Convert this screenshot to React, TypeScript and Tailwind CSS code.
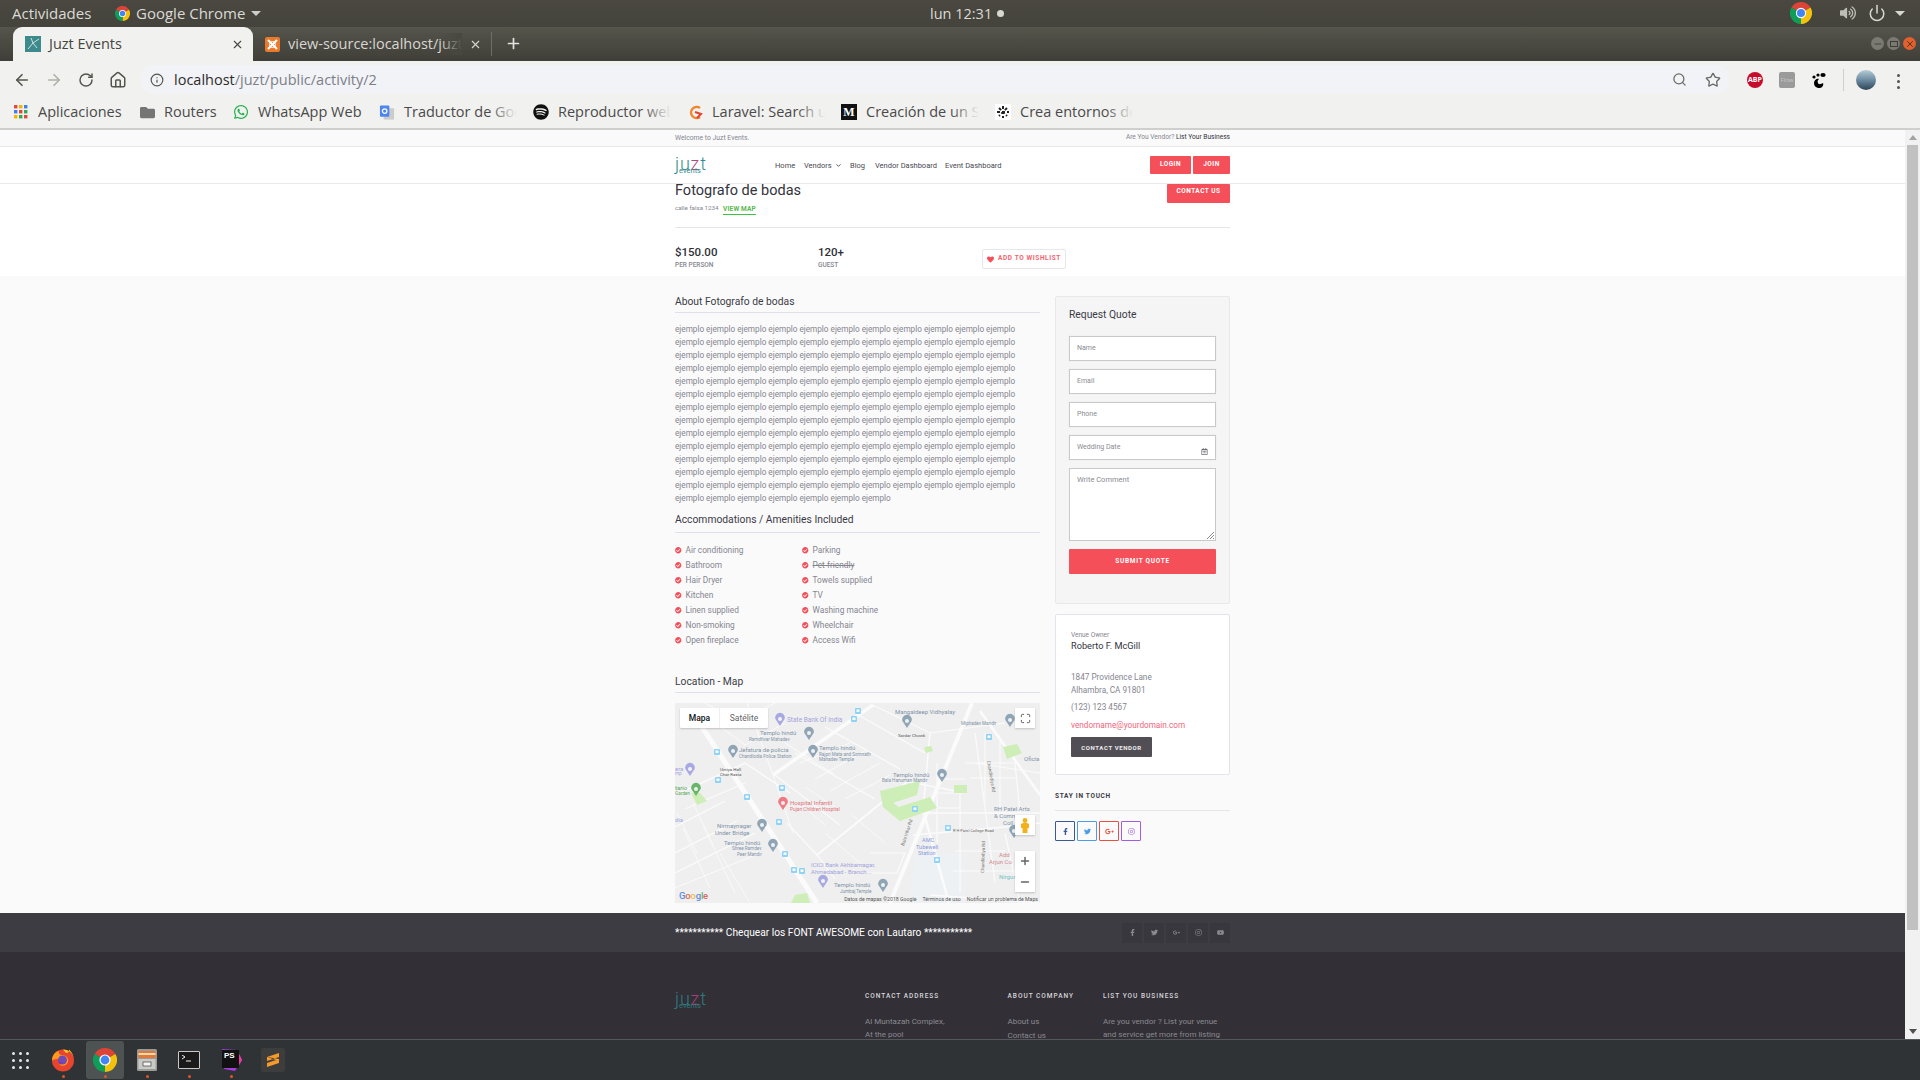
import React from "react";
import { FaFacebookF, FaTwitter, FaGooglePlusG, FaInstagram, FaYoutube, FaHeart, FaCheckCircle, FaWhatsapp, FaSpotify, FaFolder, FaRegCalendarAlt, FaVolumeUp } from "react-icons/fa";
import { ArrowLeft, ArrowRight, RotateCw, Home, Info, Search, Star, Power, X, Plus, Minus, Maximize, ChevronDown } from "lucide-react";

function ChromeLogo({ size }: { size: number }) {
  return (
    <svg width={size} height={size} viewBox="0 0 24 24">
      <path d="M12 12L1.6 6A12 12 0 0 1 22.4 6Z" fill="#db4437" />
      <path d="M12 12L22.4 6A12 12 0 0 1 12 24Z" fill="#f4c20d" />
      <path d="M12 12L12 24A12 12 0 0 1 1.6 6Z" fill="#0f9d58" />
      <circle cx="12" cy="12" r="5.6" fill="#fff" />
      <circle cx="12" cy="12" r="4.4" fill="#4285f4" />
    </svg>
  );
}

function Logo({ dim }: { dim?: boolean }) {
  return (
    <div className={`relative w-[30px] h-[17px] font-['Roboto',sans-serif] ${dim ? "opacity-85" : ""}`}>
      <div className="text-[18px] leading-[13px] font-light tracking-[0.8px] text-[#2f8a8c] whitespace-nowrap">
        ju<span className="text-[#b0487f]">z</span>t
      </div>
      <div className="absolute left-[4px] top-[10px] text-[7.5px] leading-[8px] text-[#2f8a8c]">events</div>
    </div>
  );
}

function Bookmark({ icon, label, w, fade, gap }: { icon: React.ReactNode; label: string; w: number; fade?: boolean; gap: number }) {
  return (
    <div className="flex items-center gap-[9px] h-full" style={{ marginRight: gap }}>
      <div className="w-[16px] flex justify-center items-center shrink-0">{icon}</div>
      <div className="relative overflow-hidden whitespace-nowrap text-[14.5px] text-[#4a4a4a]" style={{ width: w }}>
        {label}
        {fade && <div className="absolute right-0 top-0 bottom-0 w-[28px] bg-gradient-to-r from-transparent to-[#f1f1ef]" />}
      </div>
    </div>
  );
}

function TopSystemBar() {
  return (
    <div className="h-[27px] bg-gradient-to-b from-[#4a4840] to-[#44433c] flex items-center text-[#dbdad5] text-[15px] font-medium font-['Open_Sans',sans-serif] relative shrink-0">
      <span className="ml-[12px] w-[103px]">Actividades</span>
      <ChromeLogo size={15} />
      <span className="ml-[6px]">Google Chrome</span>
      <span className="ml-[6px] w-0 h-0 border-l-[5px] border-r-[5px] border-t-[5px] border-l-transparent border-r-transparent border-t-[#cfcdc8]" />
      <div className="absolute left-[930px] top-0 h-full flex items-center gap-[5px] text-[14.5px]">
        <span>lun 12:31</span>
        <span className="w-[7px] h-[7px] rounded-full bg-[#d8d7d2]" />
      </div>
      <div className="absolute left-[1790px] top-[2px]"><ChromeLogo size={22} /></div>
      <div className="absolute left-[1840px] top-[5px] text-[#bdbcb6]"><FaVolumeUp size={16} /></div>
      <div className="absolute left-[1868px] top-[4px] text-[#d8d7d2]"><Power size={18} strokeWidth={2} /></div>
      <span className="absolute left-[1895px] top-[11px] w-0 h-0 border-l-[5px] border-r-[5px] border-t-[5px] border-l-transparent border-r-transparent border-t-[#d8d7d2]" />
    </div>
  );
}

function TabBar() {
  return (
    <div className="h-[34px] bg-gradient-to-b from-[#56554c] to-[#3f3e38] flex items-end pl-[13px] relative shrink-0 font-['Open_Sans',sans-serif]">
      <div className="w-[240px] h-[34px] bg-[#f1f1ef] rounded-t-[9px] flex items-center pl-[12px] text-[14.5px] text-[#45453f] relative">
        <svg width="16" height="16" viewBox="0 0 16 16">
          <rect width="16" height="16" fill="#3c8a8c" />
          <path d="M3 13L8 7L14 3M8 7L6 2M8 7L12 12" stroke="#cfe3e2" strokeWidth="1" fill="none" />
        </svg>
        <span className="ml-[8px]">Juzt Events</span>
        <X size={13} className="absolute left-[218px] top-[11px] text-[#45453f]" />
      </div>
      <div className="w-[238px] h-[34px] flex items-center pl-[12px] text-[14.5px] text-[#d8d7d2] relative">
        <div className="w-[15px] h-[15px] rounded-[2px] bg-[#ea7a2b] flex items-center justify-center">
          <svg width="11" height="11" viewBox="0 0 11 11"><path d="M1 1L10 10M10 1L1 10" stroke="#fff" strokeWidth="2" /><circle cx="5.5" cy="5.5" r="3" fill="none" stroke="#fff" /></svg>
        </div>
        <span className="ml-[8px] w-[174px] overflow-hidden whitespace-nowrap relative">
          view-source:localhost/juzt/public
          <span className="absolute right-0 top-0 bottom-0 w-[22px] bg-gradient-to-r from-transparent to-[#494840]" />
        </span>
        <X size={13} className="absolute left-[216px] top-[11px] text-[#d8d7d2]" />
      </div>
      <div className="h-[24px] w-px bg-[#6f6e66] mb-[5px]" />
      <Plus size={17} strokeWidth={2.4} className="ml-[13px] mb-[9px] text-[#e4e3df]" />
      <div className="absolute left-[1871px] top-[10px] w-[13px] h-[13px] rounded-full bg-[#7a7972] flex items-center justify-center"><Minus size={10} className="text-[#3c3b36]" /></div>
      <div className="absolute left-[1887px] top-[10px] w-[13px] h-[13px] rounded-full bg-[#7a7972] flex items-center justify-center"><span className="w-[8px] h-[6px] border border-[#3c3b36]" /></div>
      <div className="absolute left-[1903px] top-[10px] w-[13px] h-[13px] rounded-full bg-[#e0602e] flex items-center justify-center"><X size={10} className="text-[#4a2a18]" /></div>
    </div>
  );
}

function ToolBar() {
  return (
    <div className="h-[35px] bg-[#f1f1ef] flex items-center relative shrink-0 font-['Open_Sans',sans-serif]">
      <ArrowLeft size={18} strokeWidth={2.2} className="absolute left-[13px] top-[10px] text-[#55554f]" />
      <ArrowRight size={18} strokeWidth={2.2} className="absolute left-[45px] top-[10px] text-[#b0b0ab]" />
      <RotateCw size={16} strokeWidth={2.2} className="absolute left-[78px] top-[11px] text-[#55554f]" />
      <Home size={18} strokeWidth={2} className="absolute left-[109px] top-[10px] text-[#55554f]" />
      <div className="ml-[140px] mt-[2px] w-[1590px] h-[29px] rounded-full bg-[#f2f3f6] flex items-center pl-[10px]">
        <Info size={14} className="text-[#55554f]" />
        <span className="ml-[10px] text-[14.5px] text-[#2c2c2c]">localhost<span className="text-[#7c7f88]">/juzt/public/activity/2</span></span>
      </div>
      <Search size={15} className="absolute left-[1672px] top-[11px] text-[#6a6a66]" />
      <Star size={16} strokeWidth={2} className="absolute left-[1705px] top-[11px] text-[#6a6a66]" />
      <div className="absolute left-[1747px] top-[11px] w-[16px] h-[16px] rounded-full bg-[#c70d2c] text-white text-[7px] font-bold flex items-center justify-center">ABP</div>
      <div className="absolute left-[1779px] top-[11px] w-[16px] h-[16px] rounded-[2px] bg-[#9a9a9a] text-[#c8c8c8] text-[6px] flex items-center justify-center overflow-hidden">Flow</div>
      <svg className="absolute left-[1812px] top-[11px]" width="14" height="16" viewBox="0 0 14 16">
        <path d="M8 16c-4 0-6-2-6-5s3-5 5-4c-1 1-2 2-1 4s3 1 5 0c1 2-1 5-3 5z" fill="#000" />
        <circle cx="2" cy="5" r="1.6" fill="#000" /><circle cx="6" cy="3" r="1.6" fill="#000" /><ellipse cx="11" cy="3" rx="2.6" ry="2" fill="#000" />
      </svg>
      <div className="absolute left-[1843px] top-[8px] w-px h-[22px] bg-[#cfcfcc]" />
      <div className="absolute left-[1856px] top-[9px] w-[20px] h-[20px] rounded-full bg-gradient-to-b from-[#b7cdd8] via-[#6d8ba0] to-[#2d4558]" />
      <div className="absolute left-[1897px] top-[13px] flex flex-col gap-[3px]">
        <span className="w-[3px] h-[3px] rounded-full bg-[#55554f]" /><span className="w-[3px] h-[3px] rounded-full bg-[#55554f]" /><span className="w-[3px] h-[3px] rounded-full bg-[#55554f]" />
      </div>
    </div>
  );
}

function BookmarksBar() {
  return (
    <div className="h-[34px] bg-[#f1f1ef] border-b-2 border-[#cfcfcd] flex items-center pl-[13px] shrink-0 font-['Open_Sans',sans-serif]">
      <Bookmark
        w={88}
        gap={13}
        icon={
          <svg width="14" height="14" viewBox="0 0 14 14">
            {[0, 5, 10].map((y, r) => [0, 5, 10].map((x, c) => (
              <rect key={`${r}${c}`} x={x} y={y} width="3.4" height="3.4" fill={["#e0483d", "#f4b400", "#3f7fe8", "#3f7fe8", "#e0483d", "#34a853", "#f4b400", "#34a853", "#e0483d"][r * 3 + c]} />
            )))}
          </svg>
        }
        label="Aplicaciones"
      />
      <Bookmark w={56} gap={13} icon={<FaFolder size={15} className="text-[#757575]" />} label="Routers" />
      <Bookmark w={108} gap={13} icon={<FaWhatsapp size={16} className="text-[#25b04e]" />} label="WhatsApp Web" />
      <Bookmark
        w={113}
        gap={16}
        fade
        icon={
          <svg width="17" height="17" viewBox="0 0 17 17"><rect x="5" y="4" width="11" height="12" fill="#ccc" /><rect x="1" y="1" width="10" height="12" rx="1" fill="#4d86ee" /><circle cx="6" cy="7" r="2.4" fill="none" stroke="#fff" strokeWidth="1.3" /></svg>
        }
        label="Traductor de Google"
      />
      <Bookmark w={113} gap={16} fade icon={<FaSpotify size={16} className="text-[#111]" />} label="Reproductor web" />
      <Bookmark
        w={113}
        gap={16}
        fade
        icon={<svg width="15" height="15" viewBox="0 0 15 15"><path d="M12 3A5.6 5.6 0 1 0 12 12" fill="none" stroke="#f4842c" strokeWidth="2.4" /><path d="M7 7L13 9L9 13" fill="none" stroke="#e2452f" strokeWidth="2" /></svg>}
        label="Laravel: Search u"
      />
      <Bookmark
        w={113}
        gap={16}
        fade
        icon={<div className="w-[16px] h-[16px] bg-[#111] text-white text-[12px] font-bold flex items-center justify-center font-['Liberation_Serif',serif]">M</div>}
        label="Creación de un Sitio"
      />
      <Bookmark
        w={113}
        gap={16}
        fade
        icon={<svg width="16" height="16" viewBox="0 0 16 16"><rect width="16" height="16" fill="#fff" /><path d="M8 2V14M2 8H14M4 4L12 12M12 4L4 12" stroke="#222" strokeWidth="2" strokeDasharray="3 2" /></svg>}
        label="Crea entornos de"
      />
    </div>
  );
}

const RED = "bg-[#f54f5a]";

function TopStrip() {
  return (
    <div className="h-[17px] bg-[#fafafa] border-b border-[#e9e9ec] shrink-0">
      <div className="w-[555px] mx-auto h-full flex items-center justify-between text-[6.8px] text-[#858590]">
        <span>Welcome to Juzt Events.</span>
        <span className="text-[6.6px]">Are You Vendor? <span className="text-[#33333c]">List Your Business</span></span>
      </div>
    </div>
  );
}

function NavBar() {
  return (
    <div className="h-[37px] bg-white border-b border-[#e9e9ec] shrink-0">
      <div className="w-[555px] mx-auto h-full flex items-center relative">
        <div className="w-[100px]"><Logo /></div>
        <nav className="flex items-center text-[7.5px] text-[#484852] font-normal mt-[1px]">
          <span className="w-[29px]">Home</span>
          <span className="w-[46px] flex items-center">Vendors <ChevronDown size={7} strokeWidth={3} className="ml-[3px]" /></span>
          <span className="w-[25px]">Blog</span>
          <span className="w-[70px]">Vendor Dashboard</span>
          <span>Event Dashboard</span>
        </nav>
        <div className="ml-auto flex gap-[2px] -mt-[1px]">
          <button className={`block w-[41px] h-[18px] ${RED} rounded-[1px] text-white text-[6.5px] font-bold tracking-[0.5px]`}>LOGIN</button>
          <button className={`block w-[37px] h-[18px] ${RED} rounded-[1px] text-white text-[6.5px] font-bold tracking-[0.5px]`}>JOIN</button>
        </div>
      </div>
    </div>
  );
}

function Hero() {
  return (
    <div className="bg-white shrink-0">
      <div className="w-[555px] mx-auto">
        <div className="h-[44px] border-b border-[#e6e6ea] flex justify-between items-start">
          <div>
            <div className="text-[14.5px] leading-[13px] text-[#33333c]">Fotografo de bodas</div>
            <div className="flex items-center mt-[5px] h-[14px] text-[6.5px] text-[#85858f]">
              <span className="w-[48px] text-[6.2px]">calle falsa 1234</span>
              <span className="font-bold text-[#57b94a] border-b border-[#3fc33f] tracking-[0.2px] leading-[9px] mt-[2px]">VIEW MAP</span>
            </div>
          </div>
          <button className={`block w-[63px] h-[19px] ${RED} rounded-[1px] text-white text-[6.5px] font-bold tracking-[0.5px] pb-[3px]`}>CONTACT US</button>
        </div>
        <div className="h-[48px] flex">
          <div className="w-[143px] pt-[17px]">
            <div className="text-[11.5px] leading-[14px] font-medium text-[#2f2f38]">$150.00</div>
            <div className="text-[6.5px] leading-[8px] mt-[2px] font-medium text-[#85858f]">PER PERSON</div>
          </div>
          <div className="w-[164px] pt-[17px]">
            <div className="text-[11.5px] leading-[14px] font-medium text-[#2f2f38]">120+</div>
            <div className="text-[6.5px] leading-[8px] mt-[2px] font-medium text-[#85858f]">GUEST</div>
          </div>
          <button className="w-[84px] h-[20px] mt-[21px] bg-white border border-[#e7e7ea] rounded-[2px] flex items-center justify-center gap-[4px] text-[6.5px] font-bold tracking-[0.6px] text-[#f6616c]">
            <FaHeart size={7} className="text-[#f54f5a]" />ADD TO WISHLIST
          </button>
        </div>
      </div>
    </div>
  );
}

const amenities: [string, string][] = [
  ["Air conditioning", "Parking"],
  ["Bathroom", "Pet-friendly"],
  ["Hair Dryer", "Towels supplied"],
  ["Kitchen", "TV"],
  ["Linen supplied", "Washing machine"],
  ["Non-smoking", "Wheelchair"],
  ["Open fireplace", "Access Wifi"],
];

function Amenity({ label }: { label: string }) {
  return (
    <div className="flex items-center gap-[4px] h-[15px] text-[8.3px] text-[#858590]">
      <FaCheckCircle size={6.5} className="text-[#f54f5a] shrink-0" />
      <span className={label === "Pet-friendly" ? "line-through" : ""}>{label}</span>
    </div>
  );
}

const roads: [string, number][] = [
  ["M27 24L142 200", 5],
  ["M98 72L198 2", 3.5],
  ["M142 152L232 79", 2],
  ["M297 0L215 200", 4],
  ["M248 107L274 200", 2.5],
  ["M305 8L365 92", 2.5],
  ["M0 92L70 60L115 90", 1.5],
  ["M72 0L98 72L118 130", 1],
  ["M112 120L142 152L160 176", 1.2],
  ["M240 110L365 110", 1.5],
  ["M238 132L330 124L365 120", 1.5],
  ["M230 78L290 90", 1.5],
  ["M198 2L255 30L330 20", 1.2],
  ["M120 50L200 96", 1.2],
  ["M150 24L225 66", 1.2],
  ["M180 10L250 50", 1.2],
  ["M100 72L165 122", 1.2],
  ["M255 30L248 107", 1.5],
  ["M290 60L340 60L345 110", 1.2],
  ["M300 30L320 180", 1.2],
  ["M285 90L285 190", 1.2],
  ["M262 60V140", 1.2],
  ["M330 130L345 200", 1.2],
  ["M10 106L70 80", 1.2],
  ["M0 124L50 98", 1.2],
  ["M0 150L62 118", 1.2],
  ["M0 170L80 130", 1.2],
  ["M2 110L22 150", 0.8],
  ["M18 100L38 142", 0.8],
  ["M195 150H230L222 170H190", 1.2],
  ["M130 84L160 104", 0.8],
  ["M125 100L150 122", 0.8],
  ["M280 148H330", 1.2],
  ["M278 168H340", 1.2],
  ["M255 192L365 200", 1.5],
  ["M110 40L160 72", 1],
  ["M125 60L175 40", 1],
  ["M140 76L190 48", 1],
  ["M155 88L205 60", 1],
  ["M170 96L215 72", 1],
  ["M30 0L62 18L100 0", 1],
  ["M40 20L70 42L110 20", 1],
  ["M300 60L365 70", 1],
  ["M295 75H340", 1],
  ["M310 30V100", 1],
  ["M325 35V105", 1],
  ["M262 90H285", 1],
  ["M262 76H290", 1],
  ["M262 105H285", 1],
  ["M8 125L35 185", 0.8],
  ["M28 122L60 190", 0.8],
  ["M45 150L75 200", 0.8],
  ["M0 185L85 150", 1],
  ["M150 130L185 160", 0.8],
  ["M175 110L210 140", 0.8],
];

const parks: string[] = [
  "M205 88L245 78L242 92L218 100L224 104L255 94L262 105L225 118L208 104Z",
  "M279 82H292V90H279Z",
  "M328 44L342 41L347 50L332 56Z",
  "M249 44L256 43L258 48L251 50Z",
  "M16 90H25L32 98L22 102Z",
  "M120 192L132 190L135 200H116Z",
];

type L = [number, number, string, number, string];
const bl = "#7f93a8";
const labels: L[] = [
  [112, 19, "State Bank Of India", 6.5, "#a3a3dd"],
  [85, 32, "Templo hindú", 6, bl],
  [74, 38, "Ramdhvar Mahadev", 4.6, bl],
  [64, 49, "Jefatura de policia", 6, bl],
  [64, 55, "Chandlodia Police Station", 4.6, bl],
  [144, 47, "Templo hindú", 6, bl],
  [144, 53, "Rajpri Mata and Somnath", 4.6, bl],
  [144, 58, "Mahadev Temple", 4.6, bl],
  [220, 11, "Mangaldeep Vidhyalay", 6, bl],
  [286, 22, "Miphadev Mandir", 4.6, bl],
  [223, 34, "Sardar Chowk", 4.4, "#555"],
  [45, 68, "Umiya Hall", 4.4, "#555"],
  [45, 73, "Char Rasta", 4.4, "#555"],
  [218, 74, "Templo hindú", 6, bl],
  [207, 79, "Bala Hanuman Mandir", 4.6, bl],
  [115, 102, "Hospital Infantil", 6, "#e2737b"],
  [115, 108, "Pujan Children Hospital", 4.8, "#e2737b"],
  [42, 125, "Nirmaynagar", 6, bl],
  [40, 132, "Under Bridge", 6, bl],
  [49, 142, "Templo hindú", 6, bl],
  [57, 147, "Shree Ramdev", 4.6, bl],
  [62, 153, "Peer Mandir", 4.6, bl],
  [136, 164, "ICICI Bank Akhbarnagar,", 6, "#a3a3dd"],
  [136, 171, "Ahmedabad -  Branch...", 6, "#a3a3dd"],
  [159, 184, "Templo hindú", 6, bl],
  [165, 190, "Jumbaj Temple", 4.6, bl],
  [319, 108, "RH Patel Arts", 6, bl],
  [319, 115, "& Commerce", 6, bl],
  [328, 122, "Coll", 6, bl],
  [278, 129, "R H Patel College Road", 4, "#666"],
  [247, 139, "AMC", 5.6, "#8a9ae0"],
  [241, 146, "Tubewell", 5.6, "#8a9ae0"],
  [243, 152, "Station", 5.6, "#8a9ae0"],
  [324, 154, "Add", 6, "#d1898e"],
  [314, 161, "Arjun Co", 6, "#d1898e"],
  [324, 176, "Nirgun", 6, "#76c2c5"],
  [349, 58, "Oficia", 6, bl],
  [0, 68, "era", 6, "#a3a3dd"],
  [0, 72, "mp", 4.6, "#a3a3dd"],
  [0, 87, "tario", 6, "#5aa85a"],
  [0, 92, "Garden", 4.6, "#5aa85a"],
  [0, 119, "dia", 6, "#a3a3dd"],
];

const pins: [number, number, string][] = [
  [105, 16, "#a9a9e2"],
  [134, 30, "#8fa5b6"],
  [58, 48, "#8fa5b6"],
  [138, 48, "#8fa5b6"],
  [232, 18, "#8fa5b6"],
  [335, 17, "#8fa5b6"],
  [15, 66, "#a9a9e2"],
  [21, 86, "#6ab56a"],
  [267, 72, "#8fa5b6"],
  [108, 100, "#ef7a83"],
  [87, 122, "#8fa5b6"],
  [98, 142, "#8fa5b6"],
  [148, 178, "#a9a9e2"],
  [208, 182, "#8fa5b6"],
  [339, 128, "#8fa5b6"],
];

const buses: [number, number][] = [
  [183, 8], [179, 16], [42, 49], [43, 77], [72, 94], [107, 85], [104, 119], [110, 151], [119, 167], [127, 168], [240, 106], [273, 125], [262, 157], [314, 34],
];

function MapBlock() {
  return (
    <div className="relative w-[365px] h-[200px] bg-[#f1f1f1] overflow-hidden font-['Roboto',sans-serif]">
      <svg width="365" height="200" viewBox="0 0 365 200" className="block">
        <rect width="365" height="200" fill="#efefef" />
        <path d="M240 150H290V200H235Z" fill="#eef1f3" />
        {roads.map(([d, w], i) => (
          <path key={i} d={d} stroke="#fbfbfb" strokeWidth={w} fill="none" />
        ))}
        {parks.map((d, i) => (
          <path key={i} d={d} fill="#cdeeb6" />
        ))}
        {labels.map(([x, y, t, s, c], i) => (
          <text key={i} x={x} y={y} fontSize={s} fill={c} fontFamily="Roboto, sans-serif">{t}</text>
        ))}
        <text x="0" y="0" fontSize="4.6" fill="#777" fontFamily="Roboto, sans-serif" transform="translate(229 143) rotate(-72)">Bala Vihar Rd</text>
        <text x="0" y="0" fontSize="4.6" fill="#777" fontFamily="Roboto, sans-serif" transform="translate(312 58) rotate(80)">Chandlodiya Rd</text>
        <text x="0" y="0" fontSize="4.6" fill="#777" fontFamily="Roboto, sans-serif" transform="translate(309 170) rotate(-88)">Chandlodiya Rd</text>
        {pins.map(([x, y, c], i) => (
          <g key={i}>
            <path d={`M${x - 4.6} ${y}A4.8 4.8 0 1 1 ${x + 4.6} ${y}L${x} ${y + 7}Z`} fill={c} />
            <circle cx={x} cy={y} r="2" fill="#fff" opacity="0.85" />
          </g>
        ))}
        {buses.map(([x, y], i) => (
          <g key={i}>
            <rect x={x - 3} y={y - 3} width="6" height="6" rx="1" fill="#8ed2f5" />
            <rect x={x - 1.5} y={y - 1.5} width="3" height="2.4" fill="#fff" />
          </g>
        ))}
      </svg>
      <div className="absolute left-[5px] top-[5px] h-[20px] bg-white flex text-[8.5px] shadow-[0_1px_2px_rgba(0,0,0,0.2)] rounded-[1px]">
        <div className="w-[40px] flex items-center justify-center text-[#111] font-medium border-r border-[#eee]">Mapa</div>
        <div className="w-[48px] flex items-center justify-center text-[#666]">Satélite</div>
      </div>
      <div className="absolute left-[340px] top-[5px] w-[20px] h-[20px] bg-white flex items-center justify-center shadow-[0_1px_2px_rgba(0,0,0,0.2)]">
        <Maximize size={11} className="text-[#555]" />
      </div>
      <div className="absolute left-[340px] top-[112px] w-[20px] h-[20px] bg-white flex items-center justify-center shadow-[0_1px_2px_rgba(0,0,0,0.2)]">
        <svg width="10" height="15" viewBox="0 0 10 15"><circle cx="5" cy="2.5" r="2.4" fill="#f2b21b" /><path d="M1 6Q5 3 9 6V10H7.5V15H2.5V10H1Z" fill="#f2b21b" /></svg>
      </div>
      <div className="absolute left-[340px] top-[148px] w-[20px] h-[41px] bg-white flex flex-col items-center justify-around shadow-[0_1px_2px_rgba(0,0,0,0.2)]">
        <Plus size={12} strokeWidth={3} className="text-[#666]" />
        <Minus size={12} strokeWidth={3} className="text-[#666]" />
      </div>
      <div className="absolute left-[4px] bottom-[2px] text-[9.5px] leading-[11px] font-medium tracking-[-0.2px]">
        <span className="text-[#5a8de8]">G</span><span className="text-[#e2685a]">o</span><span className="text-[#f0bf45]">o</span><span className="text-[#5a8de8]">g</span><span className="text-[#5fb56a]">l</span><span className="text-[#e2685a]">e</span>
      </div>
      <div className="absolute right-[2px] bottom-0 h-[7px] flex items-center gap-[6px] text-[5.2px] text-[#555] whitespace-nowrap">
        <span>Datos de mapas ©2018 Google</span><span>Términos de uso</span><span>Notificar un problema de Maps</span>
      </div>
    </div>
  );
}

function SectionHead({ title, h, mt }: { title: string; h: number; mt: number }) {
  return (
    <div className="border-b border-[#e0e1e8] text-[10.3px] leading-[14px] text-[#3a3a46]" style={{ height: h, marginTop: mt }}>
      {title}
    </div>
  );
}

function Field({ label }: { label: string }) {
  return (
    <div className="h-[25px] bg-white border border-[#c9c9c9] shadow-[0_0_1px_rgba(0,0,0,0.1)] flex items-center pl-[7px] text-[7px] text-[#8a8a92] mb-[8px] relative">
      {label}
      {label === "Wedding Date" && <FaRegCalendarAlt size={7} className="absolute right-[7px] bottom-[4px] text-[#6e6e76]" />}
    </div>
  );
}

function SocialBox({ c, children }: { c: string; children: React.ReactNode }) {
  return <div className={`w-[20px] h-[20px] border rounded-[1px] flex items-center justify-center text-[7px] ${c}`}>{children}</div>;
}

function Sidebar() {
  return (
    <div className="w-[175px] pt-[20px]">
      <div className="h-[308px] bg-[#f5f5f5] border border-[#e8e8e8] rounded-[2px] px-[13px]">
        <div className="text-[10.3px] leading-[14px] mt-[11px] mb-[14px] text-[#3a3a46]">Request Quote</div>
        <Field label="Name" />
        <Field label="Email" />
        <Field label="Phone" />
        <Field label="Wedding Date" />
        <div className="h-[73px] bg-white border border-[#c9c9c9] pl-[7px] pt-[6px] text-[7.5px] leading-[9px] text-[#8a8a92] mb-[8px] relative">
          Write Comment
          <svg className="absolute right-[1px] bottom-[1px]" width="7" height="7" viewBox="0 0 7 7"><path d="M0 7L7 0M3 7L7 3M6 7L7 6" stroke="#555" strokeWidth="0.7" /></svg>
        </div>
        <button className={`block w-full h-[25px] ${RED} rounded-[1px] text-white text-[6.5px] font-bold tracking-[0.7px]`}>SUBMIT QUOTE</button>
      </div>
      <div className="h-[161px] mt-[10px] bg-white border border-[#e3e4ea] rounded-[2px] pl-[15px] text-[8.2px] text-[#85858f]">
        <div className="text-[6.5px] leading-[8px] mt-[16px]">Venue Owner</div>
        <div className="text-[9.2px] leading-[11px] mt-[1px] text-[#33333c]">Roberto F. McGill</div>
        <div className="leading-[13px] mt-[20px]">1847 Providence Lane<br />Alhambra, CA 91801</div>
        <div className="leading-[12px] mt-[4px]">(123) 123 4567</div>
        <div className="leading-[12px] mt-[6px] text-[#f2647a]">vendorname@yourdomain.com</div>
        <button className="block w-[81px] h-[20px] mt-[6px] bg-[#524e56] rounded-[1px] text-[#eee] text-[6px] font-bold tracking-[0.6px]">CONTACT VENDOR</button>
      </div>
      <div className="text-[6.5px] font-bold tracking-[0.7px] text-[#3a3a46] mt-[16px] leading-[10px]">STAY IN TOUCH</div>
      <div className="border-b border-[#e6e6ea] h-[10px]" />
      <div className="flex gap-[2px] mt-[10px]">
        <SocialBox c="border-[#3b5998] text-[#3b5998]"><FaFacebookF /></SocialBox>
        <SocialBox c="border-[#4a9ee8] text-[#4a9ee8]"><FaTwitter /></SocialBox>
        <SocialBox c="border-[#e8503f] text-[#e8503f]"><FaGooglePlusG size={9} /></SocialBox>
        <SocialBox c="border-[#a05ce8] text-[#a05ce8]"><FaInstagram /></SocialBox>
      </div>
    </div>
  );
}

function Main() {
  return (
    <div className="h-[637px] bg-[#fafafa] shrink-0">
      <div className="w-[555px] mx-auto flex gap-[15px]">
        <div className="w-[365px]">
          <SectionHead title="About Fotografo de bodas" h={18} mt={19} />
          <div className="mt-[10px] text-[8.2px] leading-[13px] text-[#85858f] whitespace-nowrap">
            {Array.from({ length: 14 }).map((_, i) => (
              <div key={i}>{Array.from({ length: i === 13 ? 7 : 11 }).map(() => "ejemplo").join(" ")}</div>
            ))}
          </div>
          <SectionHead title="Accommodations / Amenities Included" h={20} mt={8} />
          <div className="mt-[10px] h-[105px]">
            {amenities.map(([a, b]) => (
              <div key={a} className="flex">
                <div className="w-[127px]"><Amenity label={a} /></div>
                <Amenity label={b} />
              </div>
            ))}
          </div>
          <div className="h-[27px]" />
          <SectionHead title="Location - Map" h={18} mt={0} />
          <div className="mt-[10px]"><MapBlock /></div>
        </div>
        <Sidebar />
      </div>
    </div>
  );
}

function Footer() {
  return (
    <div className="flex-1 bg-[#322f36]">
      <div className="h-[39px] bg-[#3d3c42]">
        <div className="w-[555px] mx-auto h-full flex items-center justify-between">
          <span className="text-[10.2px] text-white font-normal">*********** Chequear los FONT AWESOME con Lautaro ***********</span>
          <div className="flex gap-[2px]">
            {[<FaFacebookF key="f" />, <FaTwitter key="t" />, <FaGooglePlusG key="g" />, <FaInstagram key="i" />, <FaYoutube key="y" />].map((ic) => (
              <div key={ic.key} className="w-[20px] h-[20px] bg-[#38373d] flex items-center justify-center text-[7px] text-[#8a8a90]">{ic}</div>
            ))}
          </div>
        </div>
      </div>
      <div className="w-[555px] mx-auto flex pt-[40px]">
        <div className="w-[190px]"><Logo dim /></div>
        <div className="w-[142.5px]">
          <div className="text-[6.5px] font-medium tracking-[1px] text-[#d7d7da] leading-[8px]">CONTACT ADDRESS</div>
          <div className="mt-[15px] text-[8px] leading-[13px] text-[#8a8a90]">Al Muntazah Complex,<br />At the pool</div>
        </div>
        <div className="w-[95.5px]">
          <div className="text-[6.5px] font-medium tracking-[1px] text-[#d7d7da] leading-[8px]">ABOUT COMPANY</div>
          <div className="mt-[15px] text-[8px] leading-[14px] text-[#8a8a90]">About us<br />Contact us</div>
        </div>
        <div>
          <div className="text-[6.5px] font-medium tracking-[1px] text-[#d7d7da] leading-[8px]">LIST YOU BUSINESS</div>
          <div className="mt-[15px] text-[8px] leading-[13px] text-[#8a8a90] whitespace-nowrap">Are you vendor ? List your venue<br />and service get more from listing</div>
        </div>
      </div>
    </div>
  );
}

function Scrollbar() {
  return (
    <div className="w-[15px] bg-[#f1f1f1] flex flex-col items-center shrink-0">
      <span className="mt-[5px] w-0 h-0 border-l-[4px] border-r-[4px] border-b-[5px] border-l-transparent border-r-transparent border-b-[#a3a3a3]" />
      <div className="w-[11px] h-[785px] mt-[5px] bg-[#c1c1c1]" />
      <div className="flex-1" />
      <span className="mb-[5px] w-0 h-0 border-l-[4px] border-r-[4px] border-t-[5px] border-l-transparent border-r-transparent border-t-[#505050]" />
    </div>
  );
}

function Taskbar() {
  const dot = <span className="absolute bottom-[1px] left-1/2 -ml-[1.5px] w-[3px] h-[3px] rounded-full bg-[#e2562a]" />;
  return (
    <div className="h-[41px] bg-[#2f3335] border-t border-[#55585a] flex items-center pl-[2px] shrink-0">
      <div className="w-[40px] h-[38px] flex items-center justify-center pr-[4px]">
        <div className="grid grid-cols-3 gap-[4px]">
          {Array.from({ length: 9 }).map((_, i) => <span key={i} className="w-[3px] h-[3px] rounded-full bg-[#e8e8e8]" />)}
        </div>
      </div>
      <div className="relative w-[42px] h-[38px] flex items-center justify-center">
        <svg width="24" height="24" viewBox="0 0 24 24">
          <circle cx="12" cy="12.5" r="11" fill="#e8442e" />
          <path d="M12 1.5A11 11 0 0 1 23 12.5C23 8 21 4 18 1.5C18.500 4 17 5 15 5Z" fill="#ffc62a" />
          <path d="M1 12.500C1 6 6 3 8 3C7 5 9 7 11 7C14 7 18 9 17 14C16 18 10 19 8 16C10 17 12 16 12 14C10 15 7 13 7 11C5 11 3 11 1 12.500Z" fill="#ff9a1f" />
          <circle cx="11.500" cy="12" r="4.500" fill="#5b3dd0" opacity="0.85" />
        </svg>
        {dot}
      </div>
      <div className="relative w-[42px] h-[38px] flex items-center justify-center">
        <div className="absolute left-[2px] top-0 w-[38px] h-[38px] rounded-[3px] bg-[#4d5252]" />
        <div className="relative"><ChromeLogo size={24} /></div>
        {dot}
      </div>
      <div className="relative w-[42px] h-[38px] flex items-center justify-center">
        <svg width="20" height="22" viewBox="0 0 20 22">
          <rect width="20" height="22" rx="1.500" fill="#9a9a96" />
          <rect x="1.500" y="2" width="17" height="7" fill="#e07a3c" />
          <rect x="1.500" y="4" width="17" height="2" fill="#f3d9a8" />
          <rect x="1.500" y="10" width="17" height="10" fill="#c9c9c5" />
          <rect x="6" y="13" width="8" height="4" fill="#f2f2f2" stroke="#555" strokeWidth="0.8" />
        </svg>
        {dot}
      </div>
      <div className="relative w-[42px] h-[38px] flex items-center justify-center">
        <div className="w-[22px] h-[18px] bg-[#1a1a1a] border border-[#c9c9c9] rounded-[1px] flex items-start pl-[3px] pt-[3px]">
          <svg width="10" height="7" viewBox="0 0 10 7"><path d="M0 0L3 2L0 4" stroke="#eee" strokeWidth="1" fill="none" /><path d="M4 6H9" stroke="#eee" strokeWidth="1" /></svg>
        </div>
        {dot}
      </div>
      <div className="relative w-[42px] h-[38px] flex items-center justify-center">
        <svg width="24" height="24" viewBox="0 0 24 24">
          <path d="M3 1L18 2L23 12L16 23L5 21Z" fill="#a63be0" />
          <path d="M15 2L18 2L23 12L19 19Z" fill="#ec3ca0" />
        </svg>
        <div className="absolute left-[12px] top-[9px] w-[17px] h-[18px] bg-[#111] text-white text-[8px] font-bold leading-[10px] pl-[2px] pt-[1px] font-['Liberation_Sans',sans-serif]">PS</div>
        {dot}
      </div>
      <div className="relative w-[42px] h-[38px] flex items-center justify-center">
        <div className="w-[24px] h-[24px] bg-[#3d3d3d] rounded-[2px] flex items-center justify-center">
          <svg width="14" height="16" viewBox="0 0 14 16"><path d="M1 5L13 1V5L1 9ZM13 7L1 11V15L13 11ZM1 5L13 9V7L1 5Z" fill="#f79a2c" /></svg>
        </div>
      </div>
    </div>
  );
}

export default function App() {
  return (
    <div className="w-[1920px] h-[1080px] overflow-hidden flex flex-col font-['Roboto',sans-serif]">
      <TopSystemBar />
      <TabBar />
      <ToolBar />
      <BookmarksBar />
      <div className="flex-1 flex min-h-0">
        <div className="flex-1 flex flex-col min-w-0 overflow-hidden">
          <TopStrip />
          <NavBar />
          <Hero />
          <Main />
          <Footer />
        </div>
        <Scrollbar />
      </div>
      <Taskbar />
    </div>
  );
}
